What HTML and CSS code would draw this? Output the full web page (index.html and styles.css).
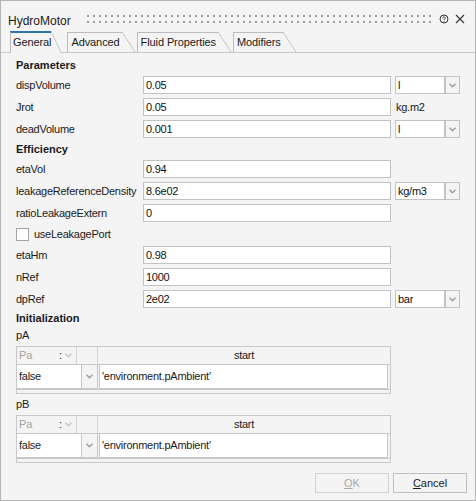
FILE: index.html
```html
<!DOCTYPE html>
<html>
<head>
<meta charset="utf-8">
<title>HydroMotor</title>
<link rel="stylesheet" href="styles.css">
</head>
<body>
<div class="window">
  <div class="titlebar">
    <span class="title">HydroMotor</span>
    <span class="grip"></span>
    <svg class="icon help" width="10" height="10" viewBox="0 0 10 10"><circle cx="5" cy="5" r="4" fill="none" stroke="#333" stroke-width="1"/><path d="M3.6 4.1 C3.6 2.6 6.4 2.6 6.4 4 C6.4 4.9 5 5 5 6" fill="none" stroke="#333" stroke-width="0.9"/><circle cx="5" cy="7.3" r="0.6" fill="#333"/></svg>
    <svg class="icon close" width="10" height="10" viewBox="0 0 10 10"><path d="M1 1 L9 9 M9 1 L1 9" stroke="#333" stroke-width="1.1"/></svg>
  </div>
  <div class="tabs">
    <div class="tab active"><span class="tab-label">General</span><span class="tab-slant"></span></div>
    <div class="tab"><span class="tab-label">Advanced</span><span class="tab-slant"></span></div>
    <div class="tab"><span class="tab-label">Fluid Properties</span><span class="tab-slant"></span></div>
    <div class="tab"><span class="tab-label">Modifiers</span><span class="tab-slant"></span></div>
  </div>
  <div class="content">
    <div class="section">Parameters</div>
    <div class="row"><span class="label">dispVolume</span><span class="field">0.05</span><span class="combo"><span class="combo-text">l</span><span class="combo-btn"><svg width="7" height="5" viewBox="0 0 7 5"><path d="M0.5 0.8 L3.5 3.8 L6.5 0.8" fill="none" stroke="#9a9a9a" stroke-width="1.3"/></svg></span></span></div>
    <div class="row"><span class="label">Jrot</span><span class="field">0.05</span><span class="unit-text">kg.m2</span></div>
    <div class="row"><span class="label">deadVolume</span><span class="field">0.001</span><span class="combo"><span class="combo-text">l</span><span class="combo-btn"><svg width="7" height="5" viewBox="0 0 7 5"><path d="M0.5 0.8 L3.5 3.8 L6.5 0.8" fill="none" stroke="#9a9a9a" stroke-width="1.3"/></svg></span></span></div>
    <div class="section">Efficiency</div>
    <div class="row"><span class="label">etaVol</span><span class="field">0.94</span></div>
    <div class="row"><span class="label">leakageReferenceDensity</span><span class="field">8.6e02</span><span class="combo"><span class="combo-text">kg/m3</span><span class="combo-btn"><svg width="7" height="5" viewBox="0 0 7 5"><path d="M0.5 0.8 L3.5 3.8 L6.5 0.8" fill="none" stroke="#9a9a9a" stroke-width="1.3"/></svg></span></span></div>
    <div class="row"><span class="label">ratioLeakageExtern</span><span class="field">0</span></div>
    <div class="row check"><span class="checkbox"></span><span class="check-label">useLeakagePort</span></div>
    <div class="row"><span class="label">etaHm</span><span class="field">0.98</span></div>
    <div class="row"><span class="label">nRef</span><span class="field">1000</span></div>
    <div class="row"><span class="label">dpRef</span><span class="field">2e02</span><span class="combo"><span class="combo-text">bar</span><span class="combo-btn"><svg width="7" height="5" viewBox="0 0 7 5"><path d="M0.5 0.8 L3.5 3.8 L6.5 0.8" fill="none" stroke="#9a9a9a" stroke-width="1.3"/></svg></span></span></div>
    <div class="section init">Initialization</div>
    <div class="plabel">pA</div>
    <div class="ptable">
      <div class="thead">
        <span class="th-unit">Pa<span class="colon">:</span></span>
        <span class="th-arrow"><svg width="7" height="5" viewBox="0 0 7 5"><path d="M0.5 0.8 L3.5 3.8 L6.5 0.8" fill="none" stroke="#c4c4c4" stroke-width="1.3"/></svg></span>
        <span class="th-empty"></span>
        <span class="th-start">start</span>
      </div>
      <div class="trow">
        <span class="cell-combo">false</span>
        <span class="cell-arrow"><svg width="7" height="5" viewBox="0 0 7 5"><path d="M0.5 0.8 L3.5 3.8 L6.5 0.8" fill="none" stroke="#9a9a9a" stroke-width="1.3"/></svg></span>
        <span class="cell-text">'environment.pAmbient'</span>
      </div>
      <div class="tstrip"></div>
    </div>
    <div class="plabel second">pB</div>
    <div class="ptable">
      <div class="thead">
        <span class="th-unit">Pa<span class="colon">:</span></span>
        <span class="th-arrow"><svg width="7" height="5" viewBox="0 0 7 5"><path d="M0.5 0.8 L3.5 3.8 L6.5 0.8" fill="none" stroke="#c4c4c4" stroke-width="1.3"/></svg></span>
        <span class="th-empty"></span>
        <span class="th-start">start</span>
      </div>
      <div class="trow">
        <span class="cell-combo">false</span>
        <span class="cell-arrow"><svg width="7" height="5" viewBox="0 0 7 5"><path d="M0.5 0.8 L3.5 3.8 L6.5 0.8" fill="none" stroke="#9a9a9a" stroke-width="1.3"/></svg></span>
        <span class="cell-text">'environment.pAmbient'</span>
      </div>
      <div class="tstrip"></div>
    </div>
  </div>
  <div class="footer">
    <span class="btn disabled"><u>O</u>K</span>
    <span class="btn"><u>C</u>ancel</span>
  </div>
</div>
</body>
</html>
```

FILE: styles.css
```css
* { box-sizing: border-box; }
html, body { margin: 0; padding: 0; }
body {
  font-family: "Liberation Sans", Arial, sans-serif;
  font-size: 11px;
  color: #1a1a1a;
  background: #f4f4f4;
}
.window {
  width: 476px;
  height: 501px;
  border: 1px solid #b5b5b5;
  background: #f4f4f4;
  display: flex;
  flex-direction: column;
}
.titlebar {
  display: flex;
  align-items: flex-start;
  height: 30px;
  padding: 10px 10px 0 7px;
}
.title {
  font-size: 12px;
  line-height: 20px;
  color: #1a1a1a;
}
.grip {
  flex: 1;
  height: 12px;
  margin: 2px 8px 0 16px;
  background-image: radial-gradient(circle, #9c9c9c 0, #9c9c9c 0.9px, transparent 1.2px);
  background-size: 6px 6px;
  background-position: -2px 0;
}
.icon { display: block; margin-top: 3px; }
.close { margin-left: 6px; }

.tabs {
  display: flex;
  align-items: flex-end;
  height: 22px;
  padding-left: 9px;
  border-bottom: 1px solid #c9c9c9;
}
.tab {
  display: flex;
  align-items: stretch;
  margin-right: 2px;
}
.tab-label {
  height: 20px;
  line-height: 19px;
  padding: 0 2px 0 3px;
  border-top: 1px solid #bcbcbc;
  border-left: 1px solid #bcbcbc;
  letter-spacing: -0.1px;
  white-space: nowrap;
}
.tab-slant {
  width: 13px;
  background: linear-gradient(to top right, transparent calc(50% - 0.7px), #bcbcbc 50%, transparent calc(50% + 0.7px));
}
.tab.active {
  margin-right: 6px;
  margin-bottom: -1px;
}
.tab.active .tab-label {
  height: 22px;
  border-top: 2px solid #2c74ab;
  background: #f4f4f4;
  padding: 0 0 0 2px;
}
.tab.active .tab-slant {
  width: 10px;
  background-color: #f4f4f4;
}

.content {
  padding: 3px 0 0 15px;
}
.section {
  font-weight: bold;
  height: 18px;
  line-height: 18px;
}
.section.init {
  height: 16px;
  line-height: 16px;
}
.row {
  display: flex;
  align-items: center;
  height: 22px;
  letter-spacing: -0.25px;
}
.label {
  width: 127px;
  white-space: nowrap;
}
.field {
  width: 248px;
  height: 18px;
  border: 1px solid #c2c2c2;
  background: #fff;
  padding-left: 2px;
  line-height: 16px;
  color: #111;
}
.unit-text { margin-left: 5px; }
.combo {
  display: flex;
  margin-left: 4px;
  height: 18px;
}
.combo-text {
  width: 50px;
  border: 1px solid #c2c2c2;
  background: #fff;
  padding-left: 2px;
  line-height: 16px;
  color: #111;
}
.combo-btn {
  width: 15px;
  border: 1px solid #c2c2c2;
  display: flex;
  align-items: center;
  justify-content: center;
}
.row.check { height: 20px; }
.checkbox {
  width: 13px;
  height: 13px;
  border: 1px solid #a3a3a3;
  background: #fff;
}
.check-label { margin-left: 5px; }

.plabel {
  height: 20px;
  line-height: 18px;
}
.plabel.second { margin-top: 1px; }
.ptable {
  width: 375px;
  border: 1px solid #c8c8c8;
  background: #f4f4f4;
}
.thead {
  display: flex;
  height: 18px;
  border-bottom: 1px solid #c8c8c8;
  line-height: 17px;
}
.th-unit {
  width: 44px;
  padding-left: 2px;
  color: #a3a3a3;
  display: flex;
  justify-content: space-between;
}
.colon { color: #333; margin-right: -1px; }
.th-arrow {
  width: 16px;
  border-right: 1px solid #d4d4d4;
  display: flex;
  align-items: center;
  justify-content: center;
}
.th-empty {
  width: 21px;
  border-right: 1px solid #d4d4d4;
}
.th-start {
  flex: 1;
  text-align: center;
  letter-spacing: -0.25px;
}
.trow {
  display: flex;
  height: 24px;
  line-height: 23px;
  letter-spacing: -0.25px;
}
.cell-combo {
  width: 65px;
  background: #fff;
  border-right: 1px solid #c8c8c8;
  border-bottom: 1px solid #c8c8c8;
  padding-left: 2px;
}
.cell-arrow {
  width: 16px;
  border-right: 1px solid #c8c8c8;
  border-bottom: 1px solid #c8c8c8;
  display: flex;
  align-items: center;
  justify-content: center;
}
.cell-text {
  flex: 1;
  margin: 0 2px 0 1px;
  background: #fff;
  border: 1px solid #c8c8c8;
  border-top: none;
  padding-left: 2px;
}
.tstrip {
  height: 4px;
  border-top: 1px solid #c8c8c8;
}

.footer {
  margin-top: auto;
  display: flex;
  justify-content: flex-end;
  gap: 4px;
  padding: 0 8px 7px 0;
}
.btn {
  width: 74px;
  height: 20px;
  border: 1px solid #bfbfbf;
  background: #f4f4f4;
  display: flex;
  align-items: center;
  justify-content: center;
  color: #1a1a1a;
}
.btn.disabled {
  color: #a8a8a8;
  border-color: #d0d0d0;
}
```
